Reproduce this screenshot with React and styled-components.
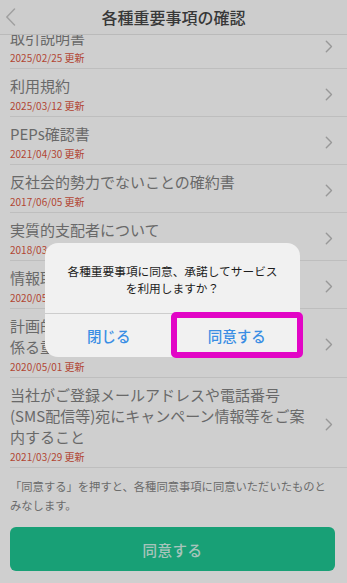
import React from "react";
import styled, { createGlobalStyle } from "styled-components";

const GlobalStyle = createGlobalStyle`
  html, body { margin: 0; padding: 0; background: #ffffff; }
  body { font-family: "Noto Sans CJK JP", "Noto Sans", sans-serif; -webkit-font-smoothing: antialiased; }
  * { box-sizing: border-box; }
`;

const Screen = styled.div`
  position: relative;
  width: 347px;
  height: 583px;
  overflow: hidden;
  display: flex;
  flex-direction: column;
  background: #ffffff;
`;

const Header = styled.header`
  position: relative;
  z-index: 2;
  flex: 0 0 35px;
  display: flex;
  align-items: center;
  justify-content: center;
  background: #fdfdfd;
  border-bottom: 1px solid #e6e6e6;
`;

const BackButton = styled.span`
  position: absolute;
  left: 5px;
  top: 8px;
  display: flex;
`;

const Title = styled.h1`
  margin: 0;
  font-size: 16px;
  font-weight: 500;
  color: #454545;
  letter-spacing: 0;
`;

const ListViewport = styled.div`
  flex: 1 1 auto;
  overflow: hidden;
`;

const List = styled.ul`
  list-style: none;
  margin: -14px 0 0 0;
  padding: 0;
`;

const Row = styled.li`
  margin-left: 10px;
  display: flex;
  align-items: center;
  border-bottom: 1px solid #ebebeb;
  padding: 6px 14px 3px 0;
`;

const RowText = styled.div`
  flex: 1 1 auto;
  min-width: 0;
  max-width: 303px;
  display: flex;
  flex-direction: column;
  gap: 3px;
`;

const RowTitle = styled.div`
  font-size: 15px;
  line-height: 21px;
  color: #828282;
`;

const RowDate = styled.div`
  font-size: 10px;
  line-height: 14px;
  color: #dc5641;
`;

const Chevron = styled.svg`
  flex: 0 0 auto;
  margin-left: auto;
`;

const Footer = styled.div`
  flex: 0 0 auto;
  display: flex;
  flex-direction: column;
  gap: 12px;
  padding: 9px 12px 12px 10px;
`;

const Note = styled.p`
  margin: 0;
  font-size: 11.3px;
  line-height: 19px;
  color: #858585;
`;

const PrimaryButton = styled.button`
  height: 44px;
  border: none;
  border-radius: 6px;
  background: #1ec592;
  color: rgba(255, 255, 255, 0.8);
  font-family: inherit;
  font-size: 14.5px;
  font-weight: 500;
  letter-spacing: 0.5px;
`;

const Overlay = styled.div`
  position: absolute;
  inset: 0;
  z-index: 5;
  background: rgba(0, 0, 0, 0.19);
`;

const Dialog = styled.div`
  position: absolute;
  left: 45px;
  top: 243px;
  width: 255px;
  border-radius: 13px;
  background: #f1f1f1;
  overflow: hidden;
`;

const Message = styled.p`
  margin: 0;
  padding: 19px 14px 17px;
  font-size: 11.7px;
  line-height: 17px;
  text-align: center;
  color: #1c1c1c;
`;

const DialogActions = styled.div`
  display: grid;
  grid-template-columns: 1fr 1fr;
  border-top: 1px solid #cdcdcd;
`;

const DialogButton = styled.button`
  height: 43px;
  border: none;
  background: transparent;
  font-family: inherit;
  font-size: 14.5px;
  font-weight: 500;
  color: #3a8ee4;
  & + & { border-left: 1px solid #cdcdcd; }
`;

const Highlight = styled.div`
  position: absolute;
  left: 171px;
  top: 312px;
  width: 132px;
  height: 46px;
  border: 6px solid #e206c6;
  border-radius: 5px;
  pointer-events: none;
`;

const items = [
  { title: "取引説明書", date: "2025/02/25" },
  { title: "利用規約", date: "2025/03/12" },
  { title: "PEPs確認書", date: "2021/04/30" },
  { title: "反社会的勢力でないことの確約書", date: "2017/06/05" },
  { title: "実質的支配者について", date: "2018/03/27" },
  { title: "情報取扱いに関する同意事項", date: "2020/05/01" },
  { title: ["計画的な資産形成のための積立投資等に", "係る重要事項の説明"], date: "2020/05/01" },
  {
    title: [
      "当社がご登録メールアドレスや電話番号",
      "(SMS配信等)宛にキャンペーン情報等をご案",
      "内すること",
    ],
    date: "2021/03/29",
  },
];

const ChevronIcon = () => (
  <Chevron width="8" height="13" viewBox="0 0 8 13" aria-hidden="true">
    <path d="M1.3 1.3 L6.5 6.5 L1.3 11.7" fill="none" stroke="#bcbcbc" strokeWidth="1.4" strokeLinecap="round" strokeLinejoin="round" />
  </Chevron>
);

export default function App() {
  return (
    <>
      <GlobalStyle />
      <Screen>
        <Header>
          <BackButton>
            <svg width="11" height="18" viewBox="0 0 11 18" aria-hidden="true">
              <path d="M9.5 1 L1.8 9 L9.5 17" fill="none" stroke="#c6c6c6" strokeWidth="1.5" strokeLinecap="round" strokeLinejoin="round" />
            </svg>
          </BackButton>
          <Title>各種重要事項の確認</Title>
        </Header>
        <ListViewport>
          <List>
            {items.map((it, i) => (
              <Row key={i}>
                <RowText>
                  <RowTitle>
                    {Array.isArray(it.title)
                      ? it.title.map((l, j) => <div key={j}>{l}</div>)
                      : it.title}
                  </RowTitle>
                  <RowDate>{it.date} 更新</RowDate>
                </RowText>
                <ChevronIcon />
              </Row>
            ))}
          </List>
        </ListViewport>
        <Footer>
          <Note>「同意する」を押すと、各種同意事項に同意いただいたものとみなします。</Note>
          <PrimaryButton>同意する</PrimaryButton>
        </Footer>
        <Overlay>
          <Dialog>
            <Message>
              各種重要事項に同意、承諾してサービス
              <br />
              を利用しますか？
            </Message>
            <DialogActions>
              <DialogButton>閉じる</DialogButton>
              <DialogButton>同意する</DialogButton>
            </DialogActions>
          </Dialog>
          <Highlight />
        </Overlay>
      </Screen>
    </>
  );
}
